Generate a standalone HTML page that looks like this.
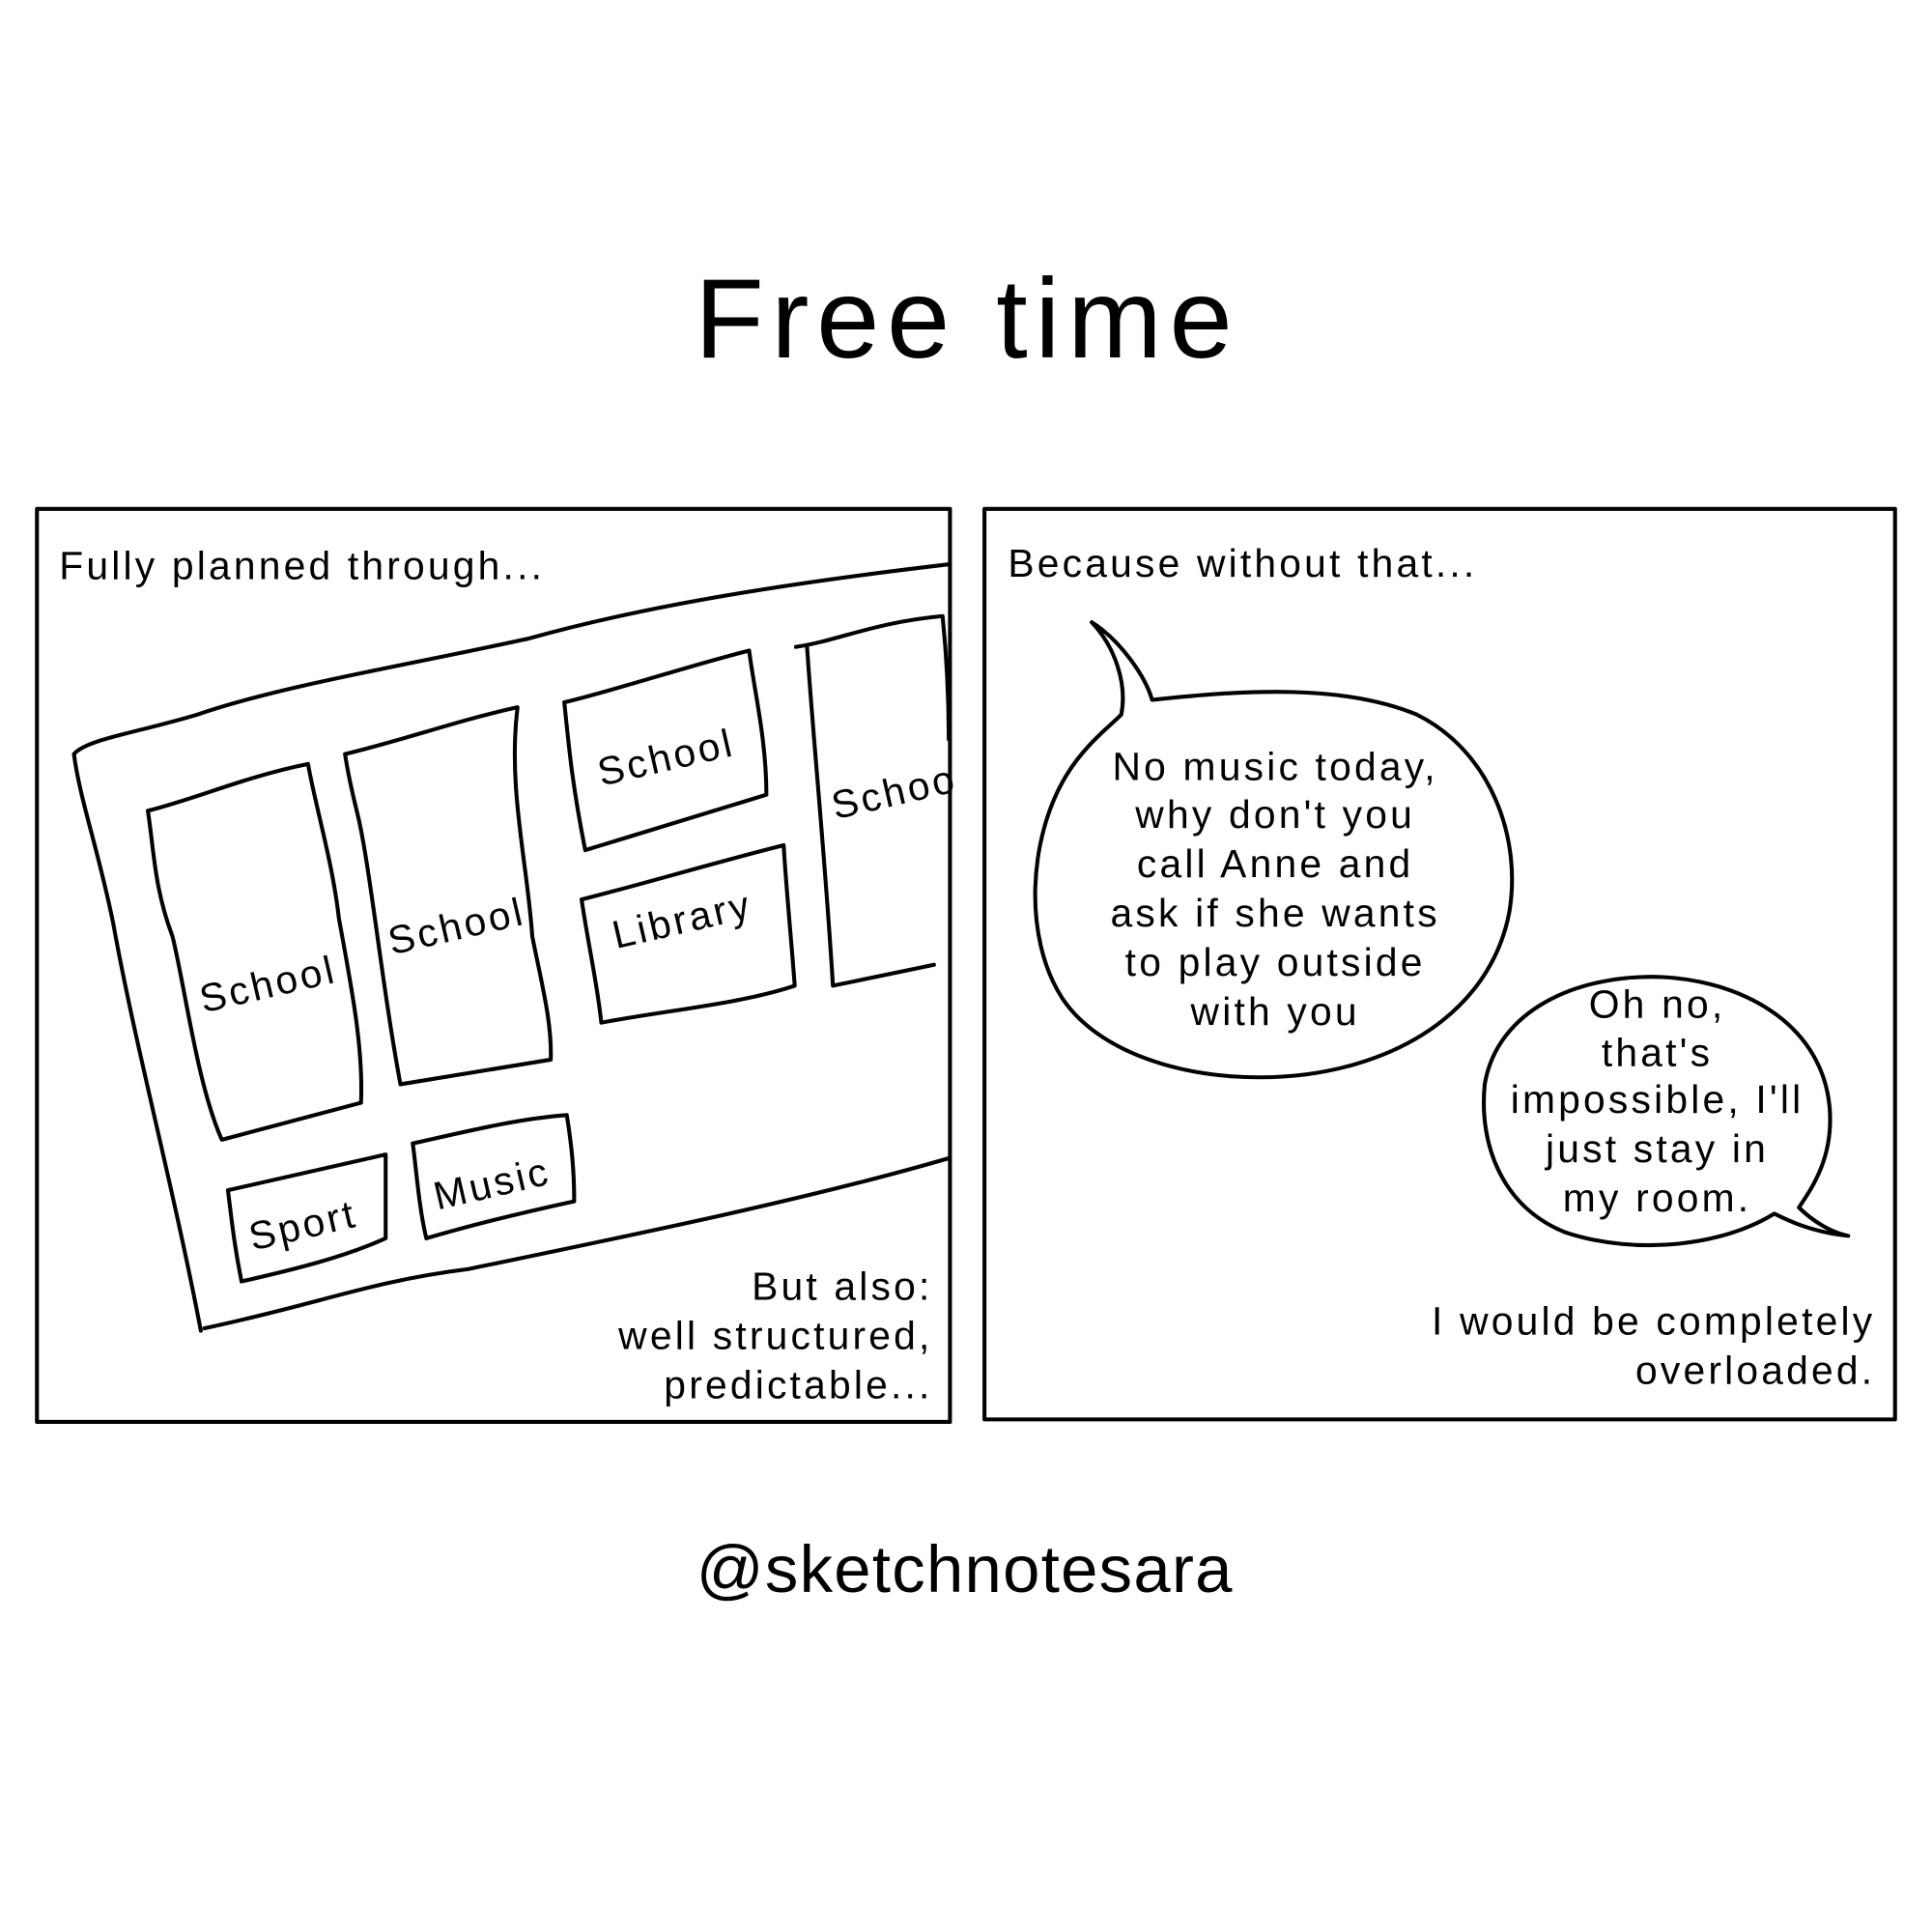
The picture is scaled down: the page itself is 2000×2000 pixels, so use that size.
<!DOCTYPE html>
<html><head><meta charset="utf-8"><style>
html,body{margin:0;padding:0;background:#fff;}
svg{display:block;}
text{font-family:"Liberation Sans","DejaVu Sans",sans-serif;fill:#000;}
</style></head><body>
<svg width="2000" height="2000" viewBox="0 0 1568 1568" xmlns="http://www.w3.org/2000/svg">
<rect width="1568" height="1568" fill="#fff"/>
<text x="785" y="290" font-size="92" text-anchor="middle" letter-spacing="6">Free time</text>
<g fill="none" stroke="#000" stroke-width="3.2" stroke-linejoin="round" stroke-linecap="round">
<rect x="30" y="413" width="741" height="741"/>
<rect x="799" y="413" width="739" height="739"/>
<path d="M770 458 C650 472 530 490 430 518 C330 540 230 556 160 580 C110 595 70 600 60 612 C65 650 80 690 92 750 C110 850 140 960 163 1080"/>
<path d="M166 1078 C260 1058 300 1040 380 1030 C500 1005 650 975 770 940"/>
<path d="M120 658 C160 648 200 630 250 620 C255 650 270 700 275 745 C285 800 295 850 293 895 L180 925 C160 880 150 800 140 760 C125 720 125 690 120 658"/>
<path d="M280 612 C330 600 370 585 420 574 C412 640 428 700 432 760 C440 800 448 830 447 860 L325 880 C310 800 300 700 290 660 C285 640 282 625 280 612"/>
<path d="M458 570 C500 560 560 540 608 528 C612 560 622 600 622 645 L475 690 C465 640 462 610 458 570"/>
<path d="M646 525 C680 520 710 505 765 500 C768 530 770 560 770 600"/>
<path d="M655 525 C660 600 670 700 676 800 L758 783"/>
<path d="M472 730 C520 718 580 700 636 686 C638 720 642 760 645 800 C600 815 540 820 488 830 C485 800 478 770 472 730"/>
<path d="M185 966 L313 937 L313 1005 C280 1020 240 1030 196 1040 C190 1010 188 990 185 966"/>
<path d="M335 928 C380 918 420 908 460 905 C464 930 466 950 466 975 C420 985 380 995 346 1005 C340 980 338 950 335 928"/>
<path d="M886 505 C910 520 930 550 935 568 C1010 560 1090 555 1150 580 C1210 610 1235 680 1225 740 C1212 810 1150 860 1060 872 C980 882 895 860 862 810 C830 760 835 680 865 630 C880 605 900 590 910 580 C915 555 905 525 886 505 Z"/>
<path d="M1500 1003 C1470 1000 1450 990 1440 985 C1400 1010 1330 1020 1270 1000 C1220 980 1200 930 1205 880 C1215 820 1280 790 1350 793 C1420 797 1480 835 1485 900 C1488 940 1470 965 1460 980 C1470 990 1485 1000 1500 1003 Z"/>
</g>
<g font-size="32" letter-spacing="2.5">
<text x="48" y="470">Fully planned through...</text>
<text x="757" y="1055" text-anchor="end">But also:</text>
<text x="757" y="1095" text-anchor="end">well structured,</text>
<text x="757" y="1135" text-anchor="end">predictable...</text>
<text x="818" y="468">Because without that...</text>
<text x="1522" y="1083" text-anchor="end">I would be completely</text>
<text x="1522" y="1123" text-anchor="end">overloaded.</text>
<g text-anchor="middle">
<text x="1035" y="633">No music today,</text>
<text x="1035" y="672">why don't you</text>
<text x="1035" y="712">call Anne and</text>
<text x="1035" y="752">ask if she wants</text>
<text x="1035" y="792">to play outside</text>
<text x="1035" y="832">with you</text>
<text x="1345" y="826">Oh no,</text>
<text x="1345" y="865">that's</text>
<text x="1345" y="903">impossible, I'll</text>
<text x="1345" y="943">just stay in</text>
<text x="1345" y="983">my room.</text>
</g>
<text transform="translate(165,822) rotate(-13)">School</text>
<text transform="translate(318,775) rotate(-13)">School</text>
<text transform="translate(488,638) rotate(-13)">School</text>
<text transform="translate(678,665) rotate(-13)">Schoo</text>
<text transform="translate(500,770) rotate(-13)">Library</text>
<text transform="translate(205,1015) rotate(-13)">Sport</text>
<text transform="translate(355,982) rotate(-13)">Music</text>
</g>
<text x="783" y="1292" font-size="54" text-anchor="middle" letter-spacing="1">@sketchnotesara</text>
</svg>
</body></html>
